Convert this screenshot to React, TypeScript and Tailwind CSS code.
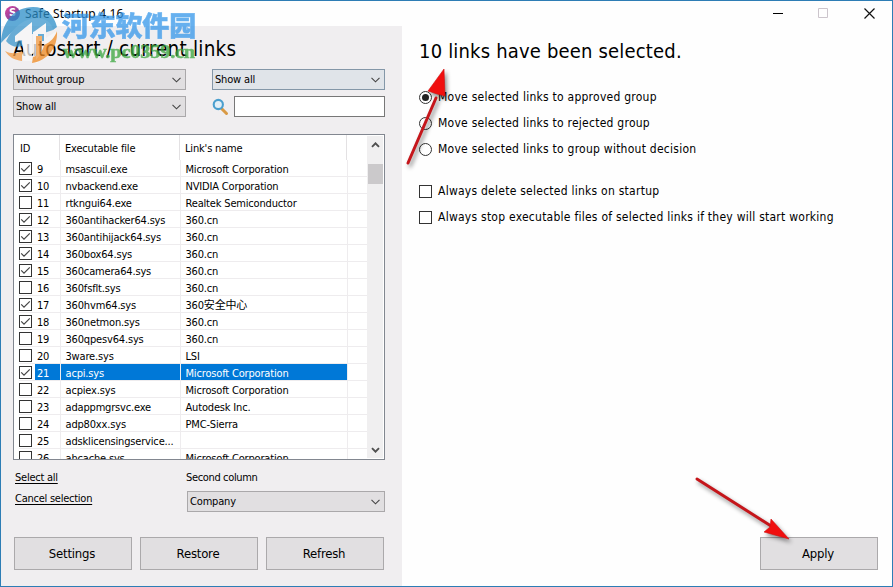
import React from 'react';

type Entry = { id: number; file: string; name: string; checked?: boolean; selected?: boolean };

const entries: Entry[] = [
  { id: 9, file: 'msascuil.exe', name: 'Microsoft Corporation', checked: true },
  { id: 10, file: 'nvbackend.exe', name: 'NVIDIA Corporation', checked: true },
  { id: 11, file: 'rtkngui64.exe', name: 'Realtek Semiconductor' },
  { id: 12, file: '360antihacker64.sys', name: '360.cn', checked: true },
  { id: 13, file: '360antihijack64.sys', name: '360.cn', checked: true },
  { id: 14, file: '360box64.sys', name: '360.cn', checked: true },
  { id: 15, file: '360camera64.sys', name: '360.cn', checked: true },
  { id: 16, file: '360fsflt.sys', name: '360.cn' },
  { id: 17, file: '360hvm64.sys', name: '360安全中心', checked: true },
  { id: 18, file: '360netmon.sys', name: '360.cn', checked: true },
  { id: 19, file: '360qpesv64.sys', name: '360.cn' },
  { id: 20, file: '3ware.sys', name: 'LSI' },
  { id: 21, file: 'acpi.sys', name: 'Microsoft Corporation', checked: true, selected: true },
  { id: 22, file: 'acpiex.sys', name: 'Microsoft Corporation' },
  { id: 23, file: 'adappmgrsvc.exe', name: 'Autodesk Inc.' },
  { id: 24, file: 'adp80xx.sys', name: 'PMC-Sierra' },
  { id: 25, file: 'adsklicensingservice...', name: '' },
  { id: 26, file: 'ahcache.sys', name: 'Microsoft Corporation' },
];

function Chevron({ up = false, bold = false }: { up?: boolean; bold?: boolean }) {
  return (
    <svg width="9" height="6" viewBox="0 0 9 6" fill="none" stroke={bold ? '#505050' : '#444'} strokeWidth={bold ? 1.9 : 1.1}>
      <path d={up ? 'M1 4.8 4.5 1.3 8 4.8' : bold ? 'M1 1.2 4.5 4.7 8 1.2' : 'M0.5 0.8 4.5 4.8 8.5 0.8'} />
    </svg>
  );
}

function Combo({ label, wide = false, hot = false }: { label: string; wide?: boolean; hot?: boolean }) {
  return (
    <div
      className={`flex h-[21px] items-center justify-between border pr-[4px] pl-[2px] ${wide ? 'w-[198px]' : 'w-[173px]'} ${
        hot ? 'border-[#8497a8] bg-[#e0e4e9]' : 'border-[#aaa8aa] bg-[#e1dfe1]'
      }`}
    >
      <span className="pt-[2px]">{label}</span>
      <Chevron />
    </div>
  );
}

function Check({ checked = false }: { checked?: boolean }) {
  return (
    <span className="flex size-[13px] shrink-0 items-center justify-center border border-[#333] bg-white">
      {checked && (
        <svg width="11" height="11" viewBox="0 0 11 11" fill="none" stroke="#444" strokeWidth="1.2">
          <path d="M1.2 5.4 4 8.2 9.8 2.4" />
        </svg>
      )}
    </span>
  );
}

function Radio({ on = false }: { on?: boolean }) {
  return (
    <span className="flex size-[13px] shrink-0 items-center justify-center rounded-full border border-[#333] bg-white">
      {on && <span className="size-[7px] rounded-full bg-[#222]" />}
    </span>
  );
}

function Button({ label }: { label: string }) {
  return (
    <button className="h-[33px] w-[118px] border border-[#aba9ab] bg-[#e1dfe1] pr-[2px] text-[13px] leading-none tracking-[-0.2px]">
      {label}
    </button>
  );
}

function Row({ e }: { e: Entry }) {
  const tint = e.selected ? 'bg-[#0078d7] text-white' : '';
  return (
    <div className="flex h-[17px] shrink-0 pl-[5px] leading-[19px]">
      <div className="flex w-[16px] items-center border-b border-[#eeecee]">
        <Check checked={e.checked} />
      </div>
      <div className={`w-[26px] border-r border-b border-[#eeecee] pl-[2px] ${tint}`}>{e.id}</div>
      <div className={`w-[120px] border-r border-b border-[#eeecee] pl-[4.5px] ${tint}`}>{e.file}</div>
      <div className={`w-[167px] border-r border-b border-[#eeecee] pl-[4.5px] ${tint}`}>{e.name}</div>
      <div className="w-[19px] border-b border-[#eeecee]" />
    </div>
  );
}

function Watermark() {
  return (
    <div className="pointer-events-none absolute top-0 left-0 opacity-75">
      <svg width="210" height="66" viewBox="0 0 210 66">
        <path d="M0 42C1 20 14 6 32 6c12 0 21 7 24 20l-4 3C45 19 30 17 17 27 8 33 3 39 0 42Z" fill="#2c8fc9" />
        <path d="M5 40C12 26 24 17 36 17c9 0 15 5 16 12l-9 3v8H33v-7h-6l-6 6v6c-6 2-12 0-16-5Z" fill="#3c97cd" />
        <path d="m14 35 17-14v39h-9V39l-8 2ZM34 30l11-8v15l11-7v6L43 46V33h-6v29h-5V31Z" fill="#f8f8f8" />
        <path d="M43 44c7-3 11-8 13-14 1 17-10 30-25 32l1-6c6-2 10-6 11-12Z" fill="#f18a22" />
        <path d="M35 35h6v12c-1 5-3 9-6 12ZM4 50c6 3 11 3 17 0v10C13 59 8 56 4 50Z" fill="#f39a42" />
        <text x="61" y="35" fontSize="27" fontWeight="900" textLength="134" fill="#3497ea" stroke="#3497ea" strokeWidth=".5" fontFamily="Noto Sans CJK SC, sans-serif">河东软件园</text>
        <text x="62" y="57" fontSize="18" fontWeight="700" textLength="132" lengthAdjust="spacingAndGlyphs" fill="#39a63d" stroke="#39a63d" strokeWidth=".5" fontFamily="Liberation Serif, serif">www.pc0359.cn</text>
      </svg>
    </div>
  );
}

function Arrow({ className, d, head, size }: { className: string; d: string; head: string; size: [number, number] }) {
  return (
    <svg className={`absolute drop-shadow-[2px_3px_2px_rgba(0,0,0,0.45)] ${className}`} width={size[0]} height={size[1]}>
      <path d={d} stroke="#c5161b" strokeWidth="3" strokeLinecap="round" />
      <path d={head} fill="#f00f0f" stroke="#d01010" strokeWidth=".6" />
    </svg>
  );
}

export default function App() {
  return (
    <div className="relative flex h-[587px] w-[893px] flex-col overflow-hidden border border-[#2d7db5] bg-[#fefefe] font-['DejaVu_Sans_Condensed','DejaVu_Sans','Noto_Sans_CJK_SC',sans-serif] text-[11px] tracking-[-0.17px] whitespace-nowrap text-black [font-stretch:condensed]">
      <header className="flex h-[25px] items-center">
        <span className="ml-[4px] flex size-[15px] items-center justify-center rounded-full bg-gradient-to-br from-[#e0409a] to-[#5b3a9c] text-[11px] font-bold text-white">S</span>
        <span className="ml-[5px] font-['Noto_Sans',sans-serif] text-[12px] tracking-[0.15px]">Safe Startup 4.16</span>
        <svg className="mr-[15px] ml-auto" width="104" height="13" viewBox="0 0 104 13" fill="none">
          <path d="M0 6.5h10" stroke="#000" />
          <path d="M45.5 1.5h9v9h-9z" stroke="#ccc5cc" />
          <path d="M91.5 1.5l10 10m0-10-10 10" stroke="#111" strokeWidth="1.2" />
        </svg>
      </header>

      <div className="flex flex-1">
        <aside className="flex w-[401px] flex-col bg-[#f0eef0] pl-[12px]">
          <h1 className="mt-[9px] h-[28px] text-[20.5px] leading-[28px] tracking-[0.2px]">Autostart / current links</h1>
          <div className="mt-[6px] flex gap-[26px]">
            <Combo label="Without group" />
            <Combo label="Show all" hot />
          </div>
          <div className="mt-[6px] flex">
            <Combo label="Show all" />
            <svg className="mt-[2px] ml-[26px]" width="17" height="18" viewBox="0 0 17 18" fill="none">
              <path d="m10 11 4.5 4.5" stroke="#d99a45" strokeWidth="3" strokeLinecap="round" />
              <circle cx="6.3" cy="6.5" r="4.6" fill="#e3eff7" stroke="#4b9fce" strokeWidth="2.1" />
            </svg>
            <div className="ml-[5px] h-[21px] w-[151px] border border-[#777] bg-white" />
          </div>

          <section className="mt-[17px] flex h-[326px] w-[372px] border border-[#828790] bg-white">
            <div className="flex w-[353px] flex-col overflow-hidden">
              <div className="flex h-[25px] shrink-0 leading-[28px]">
                <div className="w-[46px] border-r border-[#e3e1e3] pl-[6px]">ID</div>
                <div className="w-[120px] border-r border-[#e3e1e3] pl-[5px]">Executable file</div>
                <div className="w-[167px] border-r border-[#e3e1e3] pl-[5px]">Link's name</div>
              </div>
              {entries.map((e) => (
                <Row key={e.id} e={e} />
              ))}
            </div>
            <div className="my-px flex w-[16px] flex-col items-center bg-[#f0eff0]">
              <div className="flex h-[28px] items-start pt-[6px]">
                <Chevron up bold />
              </div>
              <div className="h-[20px] w-[15px] bg-[#cbc9cb]" />
              <div className="mt-auto pb-[5px]">
                <Chevron bold />
              </div>
            </div>
          </section>

          <div className="mt-[10px] flex">
            <div className="flex w-[174px] flex-col items-start pl-[2px] tracking-[-0.25px]">
              <a className="h-[21px] leading-[16px] underline underline-offset-[2px]">Select all</a>
              <a className="leading-[16px] underline underline-offset-[2px]">Cancel selection</a>
            </div>
            <div className="flex flex-col">
              <span className="mb-[5px] -ml-px leading-[16px] tracking-[-0.35px]">Second column</span>
              <Combo label="Company" wide />
            </div>
          </div>

          <div className="mt-auto mb-[16px] ml-px flex gap-[8px]">
            <Button label="Settings" />
            <Button label="Restore" />
            <Button label="Refresh" />
          </div>
        </aside>

        <main className="flex flex-1 flex-col pl-[17px] text-[12px] tracking-[0.25px]">
          <h2 className="mt-[11px] mb-[19px] h-[28px] text-[20px] leading-[28px] tracking-[0.18px]">10 links have been selected.</h2>
          <div className="flex h-[26px] items-center gap-[6px]"><Radio on />Move selected links to approved group</div>
          <div className="flex h-[26px] items-center gap-[6px]"><Radio />Move selected links to rejected group</div>
          <div className="flex h-[26px] items-center gap-[6px]"><Radio />Move selected links to group without decision</div>
          <div className="mt-[16px] flex h-[26px] items-center gap-[6px]"><Check />Always delete selected links on startup</div>
          <div className="flex h-[26px] items-center gap-[6px]"><Check />Always stop executable files of selected links if they will start working</div>
          <div className="mt-auto mr-[14px] mb-[16px] flex justify-end">
            <Button label="Apply" />
          </div>
        </main>
      </div>

      <Watermark />
      <Arrow className="top-[65px] left-[398px]" size={[60, 105]} d="M9 97 37 32" head="M45 3 46 30 38 28 29 25Z" />
      <Arrow className="top-[468px] left-[688px]" size={[112, 80]} d="M8 10 82 57" head="M100 70 75 63 81 58 82 50Z" />
    </div>
  );
}
